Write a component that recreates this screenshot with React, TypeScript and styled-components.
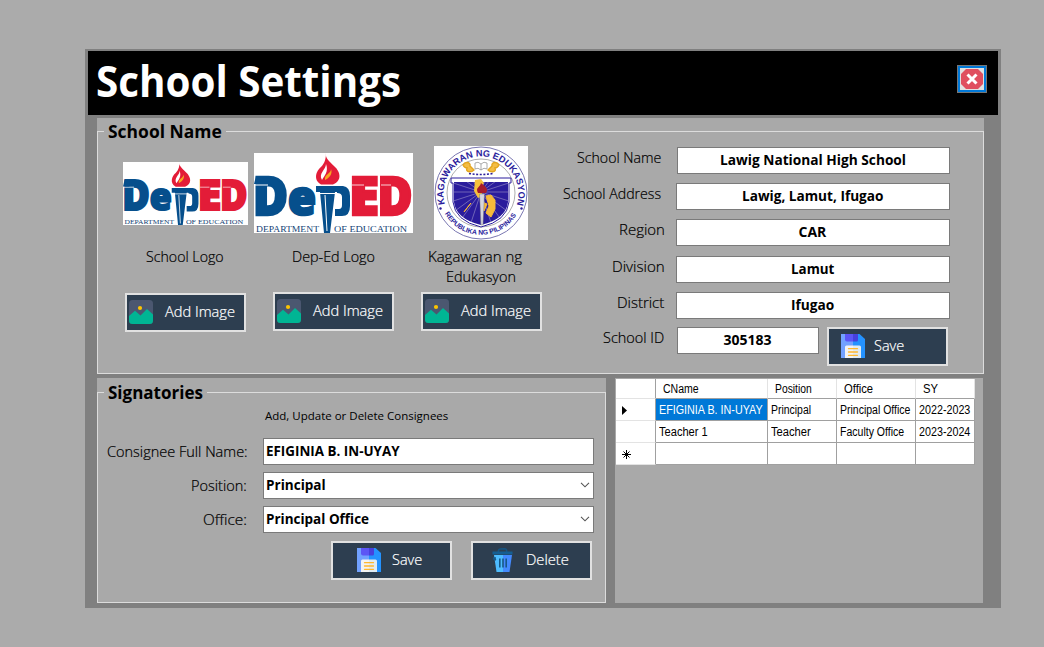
import React, { useLayoutEffect, useRef, useState } from 'react';
import styled, { createGlobalStyle } from 'styled-components';

const GlobalStyle = createGlobalStyle`
  * { box-sizing: border-box; }
  body {
    margin: 0;
    background: #ababab;
    font-family: 'Open Sans', 'Noto Sans', sans-serif;
    color: #000;
  }
`;

const FitBox = styled.span`
  display: inline-block;
  flex: none;
  text-align: left;
  white-space: nowrap;
  overflow: visible;
`;

const FitInner = styled.span`
  display: inline-block;
  transform-origin: 0 50%;
`;

/* Condenses or widens a run of text so that it takes exactly the given width. */
function Fit({ w, children }: { w: number; children: string }) {
  const ref = useRef<HTMLSpanElement>(null);
  const [scale, setScale] = useState(1);
  useLayoutEffect(() => {
    if (ref.current) setScale(w / ref.current.offsetWidth);
  }, [w, children]);
  return (
    <FitBox style={{ width: w }}>
      <FitInner ref={ref} style={{ transform: `scaleX(${scale})` }}>{children}</FitInner>
    </FitBox>
  );
}

const Desktop = styled.div`
  width: 1044px;
  height: 647px;
  padding: 49px 0 0 85px;
  background: #ababab;
  overflow: hidden;
`;

const Window = styled.main`
  width: 916px;
  height: 559px;
  padding: 2px 3px 0;
  background: #808080;
`;

const TitleBar = styled.header`
  display: flex;
  justify-content: space-between;
  height: 64px;
  padding: 0 11px 0 8px;
  background: #000;
`;

const Title = styled.h1`
  margin: 0;
  color: #fff;
  font-size: 43px;
  font-weight: 700;
  line-height: 60px;
`;

const CloseButton = styled.button`
  width: 30px;
  height: 28px;
  margin-top: 14px;
  padding: 1px 2px;
  border: 1px solid #767676;
  outline: 2px solid #0078d7;
  outline-offset: -3px;
  background: #e1e1e1;
  display: flex;
  align-items: center;
  justify-content: center;
`;

const Body = styled.div`
  display: flex;
  flex-direction: column;
  gap: 4px;
  padding: 3px 0 0 9px;
`;

const GroupBox = styled.section<{ $w: number; $h: number }>`
  display: flex;
  flex-direction: column;
  width: ${p => p.$w}px;
  height: ${p => p.$h}px;
  background: #a9a9a9;
`;

const Legend = styled.h2<{ $drop?: number }>`
  display: flex;
  align-items: center;
  gap: 4px;
  flex: none;
  height: 27px;
  margin: ${p => p.$drop ?? 0}px 0 -14px;
  font-size: 17px;
  font-weight: 700;
  line-height: 27px;
  &::before, &::after {
    content: '';
    height: 1px;
    background: #dcdcdc;
  }
  &::before { width: 7px; }
  &::after { flex: 1; }
`;

const Frame = styled.div`
  display: flex;
  flex: 1;
  border: solid #dcdcdc;
  border-width: 0 1px 1px;
`;

const Logos = styled.div`
  display: flex;
  padding: 15px 0 0 25px;
  width: 453px;
`;

const LogoCard = styled.div<{ $w: number; $gap: number }>`
  display: flex;
  flex-direction: column;
  align-items: center;
  width: ${p => p.$w}px;
  margin-right: ${p => p.$gap}px;
  flex: none;
`;

const LogoSlot = styled.div<{ $shift?: number }>`
  display: flex;
  align-items: center;
  height: 94px;
  padding-right: ${p => p.$shift ?? 0}px;
`;

const Caption = styled.div<{ $shift?: number }>`
  display: flex;
  flex-direction: column;
  align-items: center;
  height: 52px;
  padding-top: 7px;
  padding-right: ${p => p.$shift ?? 0}px;
  font-size: 14px;
  font-weight: 300;
  line-height: 20px;
  -webkit-text-stroke: 0.2px;
`;

const SecondLine = styled.span`
  padding-left: 11px;
`;

const Button = styled.button<{ $icon: number; $gap: number; $top?: number }>`
  display: flex;
  align-items: flex-start;
  flex: none;
  gap: ${p => p.$gap}px;
  width: 121px;
  height: 39px;
  margin: ${p => p.$top ?? 0}px 0 0;
  padding: 5px 0 0 ${p => p.$icon}px;
  border: 2px solid #e1e1e1;
  background: #2d3e50;
  color: #fff;
  font-family: inherit;
  font-size: 14px;
  font-weight: 300;
  line-height: 23px;
  -webkit-text-stroke: 0.2px;
  svg { flex: none; }
`;

const SchoolForm = styled.div`
  display: flex;
  flex-direction: column;
  padding-top: 16px;
`;

const Row = styled.div<{ $gap: number }>`
  display: flex;
  height: 27px;
  margin-bottom: ${p => p.$gap}px;
`;

const Label = styled.label<{ $w: number; $end: number; $line?: number }>`
  flex: none;
  width: ${p => p.$w}px;
  padding-right: ${p => p.$end}px;
  text-align: right;
  font-size: 14px;
  font-weight: 300;
  line-height: ${p => p.$line ?? 22}px;
  -webkit-text-stroke: 0.2px;
`;

const Field = styled.div<{ $w: number; $left?: boolean }>`
  display: flex;
  align-items: center;
  justify-content: ${p => (p.$left ? 'space-between' : 'center')};
  flex: none;
  width: ${p => p.$w}px;
  height: 27px;
  padding: 0 ${p => (p.$left ? 3 : 5)}px 2px ${p => (p.$left ? 2 : 4)}px;
  border: 1px solid #7a7a7a;
  background: #fff;
  font-size: 14px;
  font-weight: 700;
  line-height: 22px;
`;

const SaveSlot = styled.div`
  padding-left: 8px;
`;

const Lower = styled.div`
  display: flex;
  gap: 9px;
`;

const SignForm = styled.div`
  padding-top: 14px;
`;

const Hint = styled.p`
  margin: 0 0 12px 167px;
  font-size: 11.5px;
  font-weight: 400;
  line-height: 20px;
`;

const Actions = styled.div`
  display: flex;
  gap: 19px;
  padding: 1px 0 0 233px;
`;

const GridPanel = styled.div`
  width: 368px;
  height: 225px;
  padding: 1px 0 0 1px;
  background: #a9a9a9;
`;

const Table = styled.div`
  display: grid;
  grid-template-columns: 40px 112px 69px 79px 59px;
  grid-template-rows: 20px 22px 22px 22px;
  width: 359px;
  font-family: 'Liberation Sans', Arial, sans-serif;
  font-size: 12px;
  line-height: 22px;
`;

const Cell = styled.div<{ $kind?: 'head' | 'side' | 'active' }>`
  padding-left: ${p => (p.$kind === 'head' ? 6.5 : 3)}px;
  line-height: ${p => (p.$kind === 'head' ? 20 : 22)}px;
  border: solid #a0a0a0;
  border-width: 0 1px 1px 0;
  border-bottom-color: ${p => (p.$kind === 'side' ? '#e3e3e3' : '#a0a0a0')};
  border-right-color: ${p => (p.$kind === 'head' ? '#e3e3e3' : '#a0a0a0')};
  background: ${p => (p.$kind === 'active' ? '#0078d7' : '#fff')};
  color: ${p => (p.$kind === 'active' ? '#fff' : '#000')};
  svg { display: block; margin: 6px 0 0 2px; }
`;

function DepEdLogo({ width, height }: { width: number; height: number }) {
  return (
    <svg width={width} height={height} viewBox="0 0 159 80" preserveAspectRatio="none">
      <rect width="159" height="80" fill="#fff" />
      <g fontFamily="'Open Sans', sans-serif" fontWeight="800" fontSize="53" strokeWidth="2.6">
        <g fill="#064f8c" stroke="#064f8c">
          <text x="-1" y="61.500" textLength="35" lengthAdjust="spacingAndGlyphs">D</text>
          <text x="34" y="61.500" fontSize="48" textLength="28" lengthAdjust="spacingAndGlyphs">e</text>
        </g>
        <g fill="#e31c38" stroke="#e31c38">
          <text x="95" y="61.500" textLength="30" lengthAdjust="spacingAndGlyphs">E</text>
          <text x="123.500" y="61.500" textLength="35" lengthAdjust="spacingAndGlyphs">D</text>
        </g>
      </g>
      <path d="M0 32H14" stroke="#fff" strokeWidth="1" />
      <path d="M2 23H8V31H0Z" fill="#064f8c" />
      <path d="M98 32H110M127 32H137" stroke="#fff" strokeWidth="0.8" />
      <path d="M83 33H89Q96 34 96 43V53Q96 63 88 63H81V56H85Q88 56 88 52V44Q88 40 83 40Z" fill="#064f8c" />
      <path d="M62 33H85V39H81L76 80H70L66 39H62Z" fill="#064f8c" />
      <path d="M64 40.5H84M71 42L73 78" stroke="#fff" strokeWidth="1" />
      <path d="M72 0C71 5 75 8 80 13C87 19 88 28 79 31.500H67C59 27 62 18 67 14C71 10 72 5 72 0Z" fill="#e31c38" />
      <path d="M72 11C72 17 64 20 68 27C70 23 75 19 72 11Z" fill="#fff" />
      <path d="M77 16C77 21 70 21 71 27C75 25 79 21 77 16Z" fill="#f7a520" />
      <g fontFamily="'Liberation Serif', serif" fontSize="9" fill="#123f75">
        <text x="2" y="78.500" textLength="63" lengthAdjust="spacingAndGlyphs">DEPARTMENT</text>
        <text x="80" y="78.500" textLength="73" lengthAdjust="spacingAndGlyphs">OF EDUCATION</text>
      </g>
    </svg>
  );
}

function SealLogo() {
  const rays = Array.from({ length: 20 }, (_, i) => (i * Math.PI) / 10);
  return (
    <svg width="94" height="94" viewBox="0 0 94 94">
      <defs>
        <path id="sealTop" d="M11.5 60A37.5 37.5 0 1 1 82.5 60" />
        <path id="sealBottom" d="M9 64A41.5 41.5 0 0 0 85 64" />
        <clipPath id="shield"><path d="M20 36H74V56Q72 73 47 79Q22 73 20 56Z" /></clipPath>
      </defs>
      <rect width="94" height="94" fill="#fff" />
      <circle cx="47" cy="47" r="46" fill="none" stroke="#6a66a8" strokeWidth="0.9" />
      <circle cx="47" cy="47" r="34" fill="none" stroke="#777" strokeWidth="0.6" />
      <g fontFamily="'Liberation Sans', Arial, sans-serif" fontWeight="700" fill="#2a1c9c">
        <text fontSize="9.2"><textPath href="#sealTop" textLength="139" startOffset="2">KAGAWARAN NG EDUKASYON</textPath></text>
        <text fontSize="6.8"><textPath href="#sealBottom" textLength="86" startOffset="4">REPUBLIKA NG PILIPINAS</textPath></text>
      </g>
      <circle cx="6.500" cy="62.500" r="1.2" fill="#2a1c9c" />
      <circle cx="87.500" cy="62.500" r="1.2" fill="#2a1c9c" />
      <path d="M17 32H77V37H75V56Q73 75 47 81Q21 75 19 56V37H17Z" fill="#fff" stroke="#2a1c9c" strokeWidth="1" />
      <g clipPath="url(#shield)">
        <rect x="20" y="36" width="54" height="46" fill="#2a1c9c" />
        {rays.map(a => (
          <line key={a} x1="47" y1="46" x2={47 + 40 * Math.cos(a)} y2={46 + 40 * Math.sin(a)} stroke="#9d96c9" strokeWidth="0.6" />
        ))}
      </g>
      <path d="M41 34L47 33L50 37L46 43L49 50L44 52L40 45Z" fill="#f6c13c" />
      <path d="M52 50L57 49L61 54L61 63L57 71L52 67L55 60Z M48 56L53 58L50 65Z M37 57L30 66L33 62Z" fill="#f6b93a" stroke="#f6b93a" />
      <path d="M45.500 48H50.500L49 79H47Z" fill="#d5d5df" stroke="#666" strokeWidth="0.4" />
      <path d="M44 47C41 41 46 42 47 37C51 40 55 43 52 47Z" fill="#a51c2c" />
      <path d="M29 19C31 15 37 16 36 20L40 24C37 27 31 26 33 22C31 22 30 21 29 19ZM65 19C63 15 57 16 58 20L54 24C57 27 63 26 61 22C63 22 64 21 65 19Z" fill="#f3bd45" stroke="#e3a51f" strokeWidth="1.4" />
      <path d="M41 17Q44 15 47 18Q50 15 53 17V23Q50 21 47 24Q44 21 41 23ZM47 18V24" fill="#fff" stroke="#888" strokeWidth="0.7" />
      <path d="M35 27.500Q47 29.500 59 27.500" fill="none" stroke="#2a1c9c" strokeWidth="1.600" strokeDasharray="2 1.600" />
    </svg>
  );
}

function PictureIcon() {
  return (
    <svg width="24" height="24" viewBox="0 0 24 24">
      <rect width="24" height="24" rx="3.5" fill="#4b5770" />
      <path d="M0 16L6 10.800L11.500 15.500L18 9L24 14.500V20.500Q24 24 20.500 24H3.500Q0 24 0 20.500Z" fill="#00b594" />
      <circle cx="11" cy="8" r="2.100" fill="#fdc400" />
    </svg>
  );
}

function FloppyIcon() {
  return (
    <svg width="24" height="24" viewBox="0 0 24 24">
      <path d="M0 0H12V24H0Z" fill="#72a1ff" />
      <path d="M12 0H18.500L24 5V24H12Z" fill="#2492ff" />
      <path d="M4 0H12V7.500H6Q4 7.500 4 5.500Z" fill="#5c55f5" />
      <path d="M12 0H17V6Q17 7.500 15.500 7.500H12Z" fill="#4740dc" />
      <path d="M4 24V13Q4 11.500 5.500 11.500H12V24Z" fill="#f3f3f3" />
      <path d="M12 11.500H18.500Q20 11.500 20 13V24H12Z" fill="#e1ebf2" />
      <path d="M7.500 14.700H16.500M7.500 18H16.500M7.500 21.300H16.500" stroke="#ffb72d" strokeWidth="1.300" strokeLinecap="round" />
    </svg>
  );
}

function TrashIcon() {
  return (
    <svg width="21" height="24" viewBox="0 0 21 24">
      <path d="M2 7H11V24H4.500Z" fill="#4ebcff" />
      <path d="M11 7H20L17.500 24H11Z" fill="#448aff" />
      <path d="M6.500 4Q6 1.500 8 1L13 0.800Q15 1 14.500 4" fill="none" stroke="#165583" strokeWidth="1.600" />
      <path d="M0.500 3.500H20.500V6.500H0.500Z" fill="#155e92" />
      <path d="M1 10.500L4 12M1 10H4" stroke="#175887" strokeWidth="1.500" />
      <path d="M7.800 10.500V19.500M11 10.500V19.500M14.200 10.500V19.500" stroke="#175887" strokeWidth="1.600" />
    </svg>
  );
}

const Chevron = () => (
  <svg width="10" height="6" viewBox="0 0 10 6">
    <path d="M1 0.800L5 4.800L9 0.800" fill="none" stroke="#555" strokeWidth="1.100" />
  </svg>
);

const schoolRows = [
  { label: 'School Name', lw: 84, end: 16, value: 'Lawig National High School', vw: 186, w: 273, x: 127, gap: 9 },
  { label: 'School Address', lw: 98, end: 15, value: 'Lawig, Lamut, Ifugao', vw: 141, w: 274, x: 126, gap: 9 },
  { label: 'Region', lw: 46, end: 11, value: 'CAR', vw: 28, w: 274, x: 126, gap: 10 },
  { label: 'Division', lw: 53, end: 11, value: 'Lamut', vw: 43, w: 274, x: 126, gap: 9 },
  { label: 'District', lw: 47, end: 12, value: 'Ifugao', vw: 43, w: 274, x: 126, gap: 8 },
];

const signRows = [
  { label: 'Consignee Full Name:', lw: 141, end: 15, value: 'EFIGINIA B. IN-UYAY', vw: 134, select: false },
  { label: 'Position:', lw: 56, end: 16, value: 'Principal', vw: 60, select: true },
  { label: 'Office:', lw: 44, end: 16, value: 'Principal Office', vw: 103, select: true },
];

const AddImage = ({ top }: { top?: number }) => (
  <Button $icon={2} $gap={12} $top={top}><PictureIcon /><Fit w={70}>Add Image</Fit></Button>
);

export default function App() {
  return (
    <Desktop>
      <GlobalStyle />
      <Window>
        <TitleBar>
          <Title><Fit w={305}>School Settings</Fit></Title>
          <CloseButton aria-label="Close">
            <svg width="22" height="20" viewBox="0 0 22 20">
              <path d="M5 0H17L22 5V15L17 20H5L0 15V5Z" fill="#e04f5f" stroke="none" />
              <path d="M6.500 5.500L15.500 14.500M15.500 5.500L6.500 14.500" stroke="#fff" strokeWidth="3" />
            </svg>
          </CloseButton>
        </TitleBar>
        <Body>
          <GroupBox $w={887} $h={256}>
            <Legend><Fit w={114}>School Name</Fit></Legend>
            <Frame>
              <Logos>
                <LogoCard $w={125} $gap={6}>
                  <LogoSlot><DepEdLogo width={125} height={63} /></LogoSlot>
                  <Caption $shift={2}><Fit w={78}>School Logo</Fit></Caption>
                  <AddImage top={1} />
                </LogoCard>
                <LogoCard $w={159} $gap={8}>
                  <LogoSlot><DepEdLogo width={159} height={80} /></LogoSlot>
                  <Caption><Fit w={83}>Dep-Ed Logo</Fit></Caption>
                  <AddImage />
                </LogoCard>
                <LogoCard $w={121} $gap={0}>
                  <LogoSlot $shift={1}><SealLogo /></LogoSlot>
                  <Caption $shift={13}>
                    <Fit w={94}>Kagawaran ng</Fit>
                    <SecondLine><Fit w={70}>Edukasyon</Fit></SecondLine>
                  </Caption>
                  <AddImage />
                </LogoCard>
              </Logos>
              <SchoolForm>
                {schoolRows.map(r => (
                  <Row key={r.label} $gap={r.gap}>
                    <Label $w={r.x - 1} $end={r.end}><Fit w={r.lw}>{r.label}</Fit></Label>
                    <Field $w={r.w}><Fit w={r.vw}>{r.value}</Fit></Field>
                  </Row>
                ))}
                <Row $gap={0}>
                  <Label $w={126} $end={13}><Fit w={61}>School ID</Fit></Label>
                  <Field $w={142}><Fit w={48}>305183</Fit></Field>
                  <SaveSlot>
                    <Button $icon={12} $gap={9}><FloppyIcon /><Fit w={30}>Save</Fit></Button>
                  </SaveSlot>
                </Row>
              </SchoolForm>
            </Frame>
          </GroupBox>
          <Lower>
            <GroupBox $w={509} $h={225}>
              <Legend $drop={1}><Fit w={95}>Signatories</Fit></Legend>
              <Frame>
                <SignForm>
                  <Hint><Fit w={183}>Add, Update or Delete Consignees</Fit></Hint>
                  {signRows.map(r => (
                    <Row key={r.label} $gap={7}>
                      <Label $w={165} $end={r.end} $line={27}><Fit w={r.lw}>{r.label}</Fit></Label>
                      <Field $w={331} $left><Fit w={r.vw}>{r.value}</Fit>{r.select && <Chevron />}</Field>
                    </Row>
                  ))}
                  <Actions>
                    <Button $icon={24} $gap={11}><FloppyIcon /><Fit w={30}>Save</Fit></Button>
                    <Button $icon={19} $gap={13}><TrashIcon /><Fit w={43}>Delete</Fit></Button>
                  </Actions>
                </SignForm>
              </Frame>
            </GroupBox>
            <GridPanel>
              <Table>
                <Cell $kind="side" />
                <Cell $kind="head"><Fit w={36}>CName</Fit></Cell>
                <Cell $kind="head"><Fit w={37}>Position</Fit></Cell>
                <Cell $kind="head"><Fit w={29}>Office</Fit></Cell>
                <Cell $kind="head"><Fit w={15}>SY</Fit></Cell>
                <Cell $kind="side"><svg width="10" height="11" viewBox="0 0 10 11"><path d="M1 1V10L6 5.500Z" /></svg></Cell>
                <Cell $kind="active"><Fit w={104}>EFIGINIA B. IN-UYAY</Fit></Cell>
                <Cell><Fit w={40}>Principal</Fit></Cell>
                <Cell><Fit w={70}>Principal Office</Fit></Cell>
                <Cell><Fit w={51}>2022-2023</Fit></Cell>
                <Cell $kind="side" />
                <Cell><Fit w={49}>Teacher 1</Fit></Cell>
                <Cell><Fit w={40}>Teacher</Fit></Cell>
                <Cell><Fit w={64}>Faculty Office</Fit></Cell>
                <Cell><Fit w={51}>2023-2024</Fit></Cell>
                <Cell $kind="side">
                  <svg width="11" height="11" viewBox="0 0 11 11">
                    <path d="M5.500 1V10M1 5.500H10M2.500 2.500L8.500 8.500M8.500 2.500L2.500 8.500" stroke="#000" strokeWidth="1" />
                  </svg>
                </Cell>
                <Cell /><Cell /><Cell /><Cell />
              </Table>
            </GridPanel>
          </Lower>
        </Body>
      </Window>
    </Desktop>
  );
}
